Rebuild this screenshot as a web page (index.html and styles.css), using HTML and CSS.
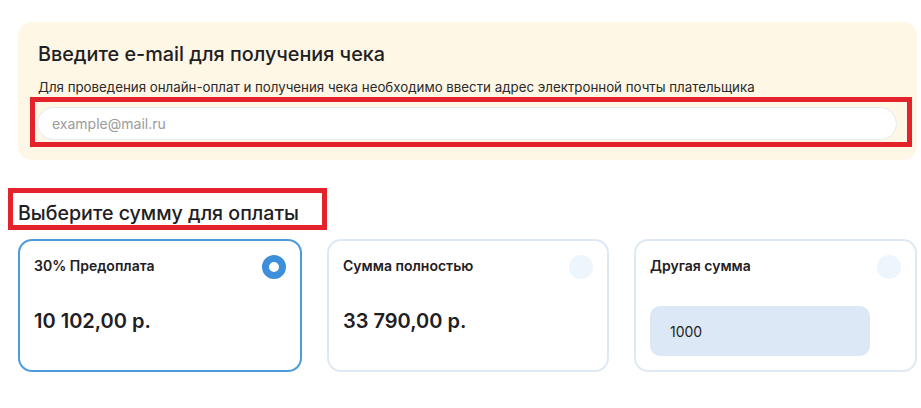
FILE: index.html
```html
<!DOCTYPE html>
<html lang="ru">
<head>
<meta charset="utf-8">
<link rel="stylesheet" href="styles.css">
</head>
<body>
<div class="page">
  <section class="email-panel">
    <h2 class="email-title">Введите e-mail для получения чека</h2>
    <p class="email-desc">Для проведения онлайн-оплат и получения чека необходимо ввести адрес электронной почты плательщика</p>
    <div class="mark email-mark">
      <input class="email-input" type="text" placeholder="example@mail.ru">
    </div>
  </section>

  <div class="mark heading-mark">
    <h2 class="sum-title">Выберите сумму для оплаты</h2>
  </div>

  <div class="cards">
    <div class="card card-active">
      <div class="card-head">
        <span class="card-name">30% Предоплата</span>
        <span class="radio radio-on"></span>
      </div>
      <div class="card-amount">10 102,00 р.</div>
    </div>
    <div class="card">
      <div class="card-head">
        <span class="card-name">Сумма полностью</span>
        <span class="radio"></span>
      </div>
      <div class="card-amount">33 790,00 р.</div>
    </div>
    <div class="card">
      <div class="card-head">
        <span class="card-name">Другая сумма</span>
        <span class="radio"></span>
      </div>
      <div class="other-input">1000</div>
    </div>
  </div>
</div>
</body>
</html>
```

FILE: styles.css
```css
* { box-sizing: border-box; }
html, body { margin: 0; padding: 0; background: #fff; }
body {
  font-family: Inter, "Noto Sans", "Liberation Sans", sans-serif;
  color: #1f2023;
}
.page {
  padding: 22px 4px 0 18px;
  width: 921px;
}
.email-panel {
  width: 899px;
  background: #fef7e6;
  border-radius: 14px;
  padding: 20px 20px 13px 20px;
}
.email-title {
  margin: 0;
  font-size: 19.8px;
  line-height: 24px;
  font-weight: 500;
}
.email-desc {
  margin: 13px 0 0 0;
  font-size: 13.3px;
  line-height: 16px;
  color: #2a2a2a;
}
.mark {
  border: 5px solid #e3222b;
}
.email-mark {
  margin: 2px 0 0 -8px;
  width: 882px;
  padding: 5px 10px 2px 2px;
}
.email-input {
  display: block;
  width: 100%;
  height: 33px;
  border: 1px solid #e4eaf0;
  border-radius: 17px;
  background: #fff;
  padding: 0 14px;
  font-family: Inter, "Noto Sans", "Liberation Sans", sans-serif;
  font-size: 14px;
  color: #333;
  outline: none;
}
.email-input::placeholder { color: #9b9b9b; }
.heading-mark {
  margin: 28px 0 0 -10px;
  width: 319px;
  height: 42px;
  padding: 8px 0 0 5px;
}
.sum-title {
  margin: 0;
  font-size: 19.6px;
  line-height: 24px;
  font-weight: 500;
  white-space: nowrap;
}
.cards {
  margin-top: 9px;
  display: grid;
  grid-template-columns: 284px 282px 283px;
  column-gap: 25px;
  width: 899px;
}
.card {
  height: 133px;
  border: 2px solid #dfe9f4;
  border-radius: 14px;
  padding: 14px 14px 0 14px;
  background: #fff;
}
.card-active { border-color: #4a9be0; }
.card-head {
  display: flex;
  justify-content: space-between;
  align-items: center;
  height: 24px;
}
.card-name {
  font-size: 14px;
  font-weight: 600;
  line-height: 17px;
  margin-top: -3px;
}
.radio {
  width: 24px;
  height: 24px;
  border-radius: 50%;
  background: #edf5fd;
  flex: none;
}
.radio-on {
  background: #fff;
  border: 7.5px solid #3d8fdb;
}
.card-amount {
  margin-top: 30px;
  font-size: 20px;
  line-height: 24px;
  font-weight: 600;
}
.other-input {
  margin-top: 27px;
  width: 220px;
  height: 50px;
  border-radius: 10px;
  background: #dce8f5;
  padding-left: 20px;
  display: flex;
  align-items: center;
  font-size: 14px;
  color: #222;
}
```
